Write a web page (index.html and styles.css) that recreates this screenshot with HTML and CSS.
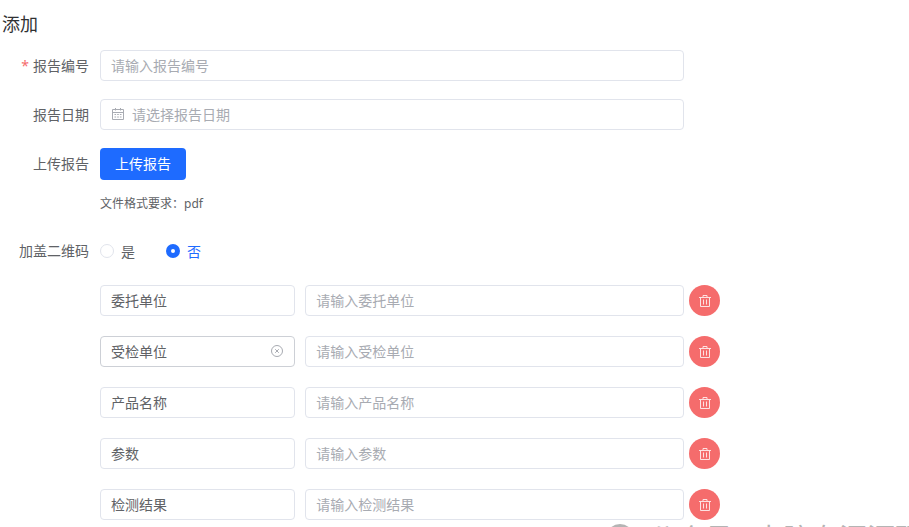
FILE: index.html
```html
<!DOCTYPE html>
<html lang="zh-CN">
<head>
  <meta charset="UTF-8" />
  <meta name="viewport" content="width=device-width, initial-scale=1.0"/>
  <title>添加</title>
  <link rel="stylesheet" href="styles.css">
</head>
<body>

  <!-- Shared icons -->
  <svg class="sprite" aria-hidden="true">
    <symbol id="trash" viewBox="0 0 14 14">
      <path d="M1 3.5h12M5 3.5v-2h4v2M2.5 3.5v9h9v-9M5.5 5.5v5M8.5 5.5v5" fill="none" stroke="currentColor"/>
    </symbol>
  </svg>

  <main class="page">
    <h1 class="title">添加</h1>

    <form class="form">
      <div class="form-item">
        <label class="label required" for="reportNo">报告编号</label>
        <input class="input" type="text" id="reportNo" placeholder="请输入报告编号" required />
      </div>

      <div class="form-item">
        <label class="label" for="reportDate">报告日期</label>
        <div class="input date-box">
          <svg class="icon" viewBox="0 0 14 14" aria-hidden="true">
            <path d="M1.5 2.5h11v10h-11zM1.5 5.5h11M4.5 1v2.5M9.5 1v2.5" fill="none" stroke="currentColor"/>
            <path d="M3.5 7.5h7M3.5 10h7" fill="none" stroke="currentColor" stroke-dasharray="1.6 1.1"/>
          </svg>
          <input type="text" id="reportDate" placeholder="请选择报告日期" />
        </div>
      </div>

      <div class="form-item upload-item">
        <label class="label" for="uploadBtn">上传报告</label>
        <div class="upload">
          <button type="button" class="btn" id="uploadBtn">上传报告</button>
          <p class="tip">文件格式要求：pdf</p>
        </div>
      </div>

      <div class="form-item radio-item" role="radiogroup" aria-labelledby="qrLabel">
        <span class="label" id="qrLabel">加盖二维码</span>
        <label class="radio"><input type="radio" name="qrcode" value="1" /><span>是</span></label>
        <label class="radio"><input type="radio" name="qrcode" value="0" checked /><span>否</span></label>
      </div>

      <div class="rows">
        <div class="row">
          <input class="input" type="text" value="委托单位" aria-label="名称" />
          <input class="input" type="text" placeholder="请输入委托单位" aria-label="委托单位" />
          <button type="button" class="remove" aria-label="删除"><svg class="icon"><use href="#trash"/></svg></button>
        </div>
        <div class="row">
          <div class="input clear-box">
            <input type="text" value="受检单位" aria-label="名称" />
            <button type="button" class="clear" aria-label="清空">
              <svg class="icon" viewBox="0 0 14 14">
                <circle cx="7" cy="7" r="5.5" fill="none" stroke="currentColor"/>
                <path d="M5.2 5.2l3.6 3.6M8.8 5.2l-3.6 3.6" stroke="currentColor"/>
              </svg>
            </button>
          </div>
          <input class="input" type="text" placeholder="请输入受检单位" aria-label="受检单位" />
          <button type="button" class="remove" aria-label="删除"><svg class="icon"><use href="#trash"/></svg></button>
        </div>
        <div class="row">
          <input class="input" type="text" value="产品名称" aria-label="名称" />
          <input class="input" type="text" placeholder="请输入产品名称" aria-label="产品名称" />
          <button type="button" class="remove" aria-label="删除"><svg class="icon"><use href="#trash"/></svg></button>
        </div>
        <div class="row">
          <input class="input" type="text" value="参数" aria-label="名称" />
          <input class="input" type="text" placeholder="请输入参数" aria-label="参数" />
          <button type="button" class="remove" aria-label="删除"><svg class="icon"><use href="#trash"/></svg></button>
        </div>
        <div class="row">
          <input class="input" type="text" value="检测结果" aria-label="名称" />
          <input class="input" type="text" placeholder="请输入检测结果" aria-label="检测结果" />
          <button type="button" class="remove" aria-label="删除"><svg class="icon"><use href="#trash"/></svg></button>
        </div>
      </div>
    </form>
  </main>

  <!-- Watermark, runs off the bottom edge -->
  <div class="watermark">
    <span class="watermark-logo"></span>
    <span>公众号 · 电脑专汇源码</span>
  </div>

</body>
</html>
```

FILE: styles.css
```css
:root {
  --primary: #1e6bff;
  --danger: #f56c6c;
  --border: #e1e4ec;
  --text: #606266;
  --placeholder: #a8abb2;
}

* {
  box-sizing: border-box;
}

body {
  margin: 0;
  height: 100vh;
  overflow: hidden;
  position: relative;
  background: #fff;
  color: var(--text);
  font-family: "Noto Sans", "Noto Sans CJK SC", sans-serif;
  font-size: 14px;
}

input,
button {
  font: inherit;
  color: inherit;
}

.sprite {
  display: none;
}

.icon {
  display: block;
  width: 14px;
  height: 14px;
}

.page {
  max-width: 720px;
  padding-top: 10px;
}

.title {
  margin: 0 0 12px;
  padding-left: 2px;
  font-size: 18px;
  font-weight: 400;
  line-height: 28px;
  color: #303133;
}

.form-item {
  display: flex;
  margin: 0 36px 18px 0;
}

.label {
  flex: 0 0 100px;
  padding-right: 11px;
  line-height: 31px;
  text-align: right;
}

.required::before {
  content: "*";
  margin-right: 4px;
  color: var(--danger);
}

.input {
  flex: 1;
  width: 100%;
  min-width: 0;
  height: 31px;
  padding: 0 10px 1px;
  border: 1px solid var(--border);
  border-radius: 4px;
  outline: none;
  background: #fff;
}

.input:focus {
  border-color: var(--primary);
}

input::placeholder {
  color: var(--placeholder);
  opacity: 1;
}

.date-box,
.clear-box {
  display: flex;
  align-items: center;
  gap: 7px;
}

.date-box input,
.clear-box input {
  flex: 1;
  min-width: 0;
  padding: 0;
  border: none;
  outline: none;
  background: transparent;
}

.date-box {
  color: var(--placeholder);
}

.clear-box {
  border-color: #cdd0d6;
}

.clear {
  padding: 0;
  border: none;
  background: transparent;
  color: var(--placeholder);
  cursor: pointer;
}

.btn {
  display: block;
  height: 32px;
  padding: 0 15px 2px;
  border: none;
  border-radius: 4px;
  background: var(--primary);
  color: #fff;
  cursor: pointer;
}

.upload-item {
  margin-bottom: 22px;
}

.tip {
  margin: 15px 0 0;
  font-size: 12px;
  line-height: 18px;
}

.radio-item {
  align-items: center;
  margin-bottom: 19px;
}

.radio {
  display: flex;
  align-items: center;
  gap: 7px;
  margin-right: 31px;
  cursor: pointer;
}

.radio input {
  appearance: none;
  width: 14px;
  height: 14px;
  margin: 0;
  border: 1px solid var(--border);
  border-radius: 50%;
  background: #fff;
}

.radio input:checked {
  border: 5px solid var(--primary);
}

.radio input:checked + span {
  color: var(--primary);
}

.rows {
  display: grid;
  gap: 20px;
  padding-left: 100px;
}

.row {
  display: grid;
  grid-template-columns: 34fr 10px 66fr 5px 31px;
}

.row > :nth-child(2) {
  grid-column: 3;
}

.remove {
  grid-column: 5;
  display: grid;
  place-items: center;
  width: 31px;
  height: 31px;
  padding: 0;
  border: none;
  border-radius: 50%;
  background: var(--danger);
  color: #fff;
  cursor: pointer;
}

.remove .icon {
  opacity: 0.8;
}

.watermark {
  position: absolute;
  left: 606px;
  top: 523px;
  display: flex;
  align-items: center;
  gap: 15px;
  color: #b4b4b4;
  font-size: 28px;
  line-height: 30px;
  white-space: nowrap;
}

.watermark-logo {
  width: 28px;
  height: 28px;
  border-radius: 50%;
  background: #b4b4b4;
}
```
